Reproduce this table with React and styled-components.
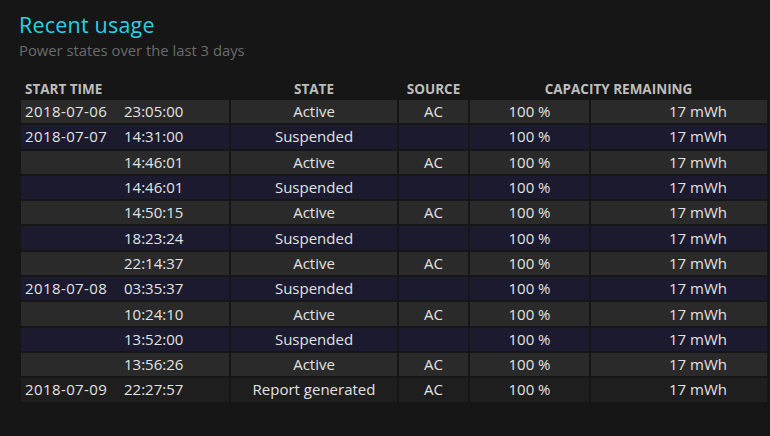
import React from "react";
import styled, { createGlobalStyle } from "styled-components";

const GlobalStyle = createGlobalStyle`
  html, body {
    margin: 0;
    padding: 0;
    background: #161616;
  }
  body {
    font-family: "Open Sans", "Noto Sans", sans-serif;
    color: #e2e2e2;
  }
`;

const Page = styled.div`
  width: 770px;
  height: 436px;
  padding: 10px 3px 0 19px;
  box-sizing: border-box;
  overflow: hidden;
`;

const Title = styled.h1`
  margin: 0;
  font-size: 21.5px;
  font-weight: 400;
  color: #22d3e6;
  line-height: 30px;
  letter-spacing: 0.2px;
`;

const Subtitle = styled.div`
  font-size: 14.8px;
  color: #6b6b6b;
  line-height: 20px;
  margin-top: 0;
`;

const Table = styled.table`
  margin-top: 18px;
  border-collapse: separate;
  border-spacing: 2px;
  width: 750px;
  font-size: 15px;
`;

const HeadCell = styled.th`
  font-size: 13.5px;
  font-weight: 700;
  color: #bdbdbd;
  text-align: ${(p) => p.align || "center"};
  padding: 0 4px;
  height: 18px;
  line-height: 18px;
`;

const Row = styled.tr`
  background: ${(p) =>
    p.kind === "Active" ? "#2a2a2a" : p.kind === "Suspended" ? "#1c1a2f" : "#1e1e1e"};
`;

const Cell = styled.td`
  height: 23.3px;
  padding: 0 4px;
  line-height: 23px;
  text-align: ${(p) => p.align || "center"};
  padding-right: ${(p) => (p.align === "right" ? "40px" : "4px")};
  white-space: nowrap;
`;

const DateSpan = styled.span`
  display: inline-block;
  width: 99px;
  letter-spacing: 0.4px;
`;

const rows = [
  ["2018-07-06", "23:05:00", "Active", "AC"],
  ["2018-07-07", "14:31:00", "Suspended", ""],
  ["", "14:46:01", "Active", "AC"],
  ["", "14:46:01", "Suspended", ""],
  ["", "14:50:15", "Active", "AC"],
  ["", "18:23:24", "Suspended", ""],
  ["", "22:14:37", "Active", "AC"],
  ["2018-07-08", "03:35:37", "Suspended", ""],
  ["", "10:24:10", "Active", "AC"],
  ["", "13:52:00", "Suspended", ""],
  ["", "13:56:26", "Active", "AC"],
  ["2018-07-09", "22:27:57", "Report generated", "AC"],
];

export default function App() {
  return (
    <Page>
      <GlobalStyle />
      <Title>Recent usage</Title>
      <Subtitle>Power states over the last 3 days</Subtitle>
      <Table>
        <colgroup>
          <col style={{ width: 208 }} />
          <col style={{ width: 166 }} />
          <col style={{ width: 69 }} />
          <col style={{ width: 119 }} />
          <col />
        </colgroup>
        <thead>
          <tr>
            <HeadCell align="left">START TIME</HeadCell>
            <HeadCell>STATE</HeadCell>
            <HeadCell>SOURCE</HeadCell>
            <HeadCell colSpan={2}>CAPACITY REMAINING</HeadCell>
          </tr>
        </thead>
        <tbody>
          {rows.map(([date, time, state, source], i) => (
            <Row key={i} kind={state}>
              <Cell align="left">
                <DateSpan>{date}</DateSpan>
                {time}
              </Cell>
              <Cell>{state}</Cell>
              <Cell>{source}</Cell>
              <Cell>100 %</Cell>
              <Cell align="right">17 mWh</Cell>
            </Row>
          ))}
        </tbody>
      </Table>
    </Page>
  );
}
